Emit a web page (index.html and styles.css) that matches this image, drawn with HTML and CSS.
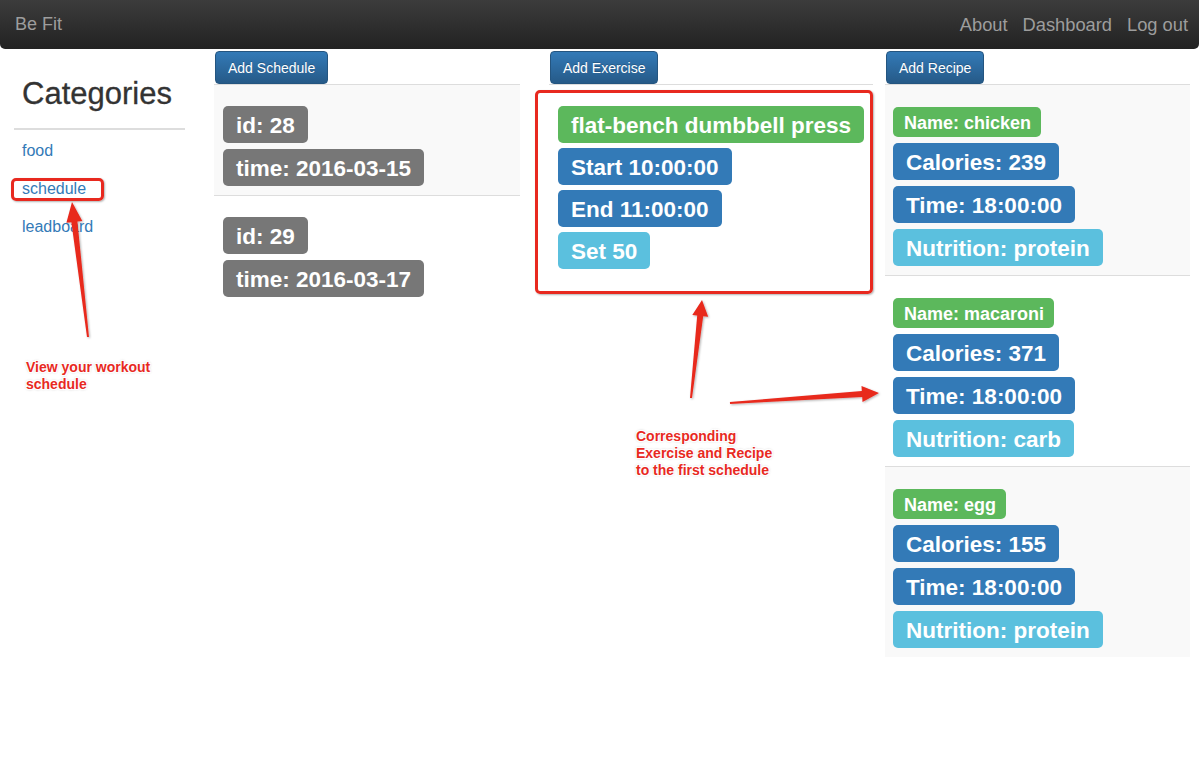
FILE: index.html
```html
<!DOCTYPE html>
<html>
<head>
<meta charset="utf-8">
<title>Be Fit</title>
<link rel="stylesheet" href="styles.css">
</head>
<body>
<nav class="navbar">
  <a class="brand" href="#">Be Fit</a>
  <ul class="nav-right">
    <li><a href="#">About</a></li>
    <li><a href="#">Dashboard</a></li>
    <li><a href="#">Log out</a></li>
  </ul>
</nav>

<div class="main">
  <aside class="sidebar">
    <h1 class="side-title">Categories</h1>
    <hr class="side-rule">
    <ul class="cat-list">
      <li><a href="#">food</a></li>
      <li><a href="#">schedule</a></li>
      <li><a href="#">leadboard</a></li>
    </ul>
  </aside>

  <section class="col">
    <button class="btn">Add Schedule</button>
    <div class="rows">
      <div class="row sched striped">
        <span class="label l-default">id: 28</span>
        <span class="label l-default">time: 2016-03-15</span>
      </div>
      <div class="row sched">
        <span class="label l-default">id: 29</span>
        <span class="label l-default">time: 2016-03-17</span>
      </div>
    </div>
  </section>

  <section class="col">
    <button class="btn">Add Exercise</button>
    <div class="rows wide">
      <div class="row exer">
        <span class="label l-success">flat-bench dumbbell press</span>
        <span class="label l-primary">Start 10:00:00</span>
        <span class="label l-primary">End 11:00:00</span>
        <span class="label l-info">Set 50</span>
      </div>
    </div>
  </section>

  <section class="col">
    <button class="btn">Add Recipe</button>
    <div class="rows">
      <div class="row recipe striped">
        <span class="label small l-success">Name: chicken</span>
        <span class="label l-primary">Calories: 239</span>
        <span class="label l-primary">Time: 18:00:00</span>
        <span class="label l-info">Nutrition: protein</span>
      </div>
      <div class="row recipe">
        <span class="label small l-success">Name: macaroni</span>
        <span class="label l-primary">Calories: 371</span>
        <span class="label l-primary">Time: 18:00:00</span>
        <span class="label l-info">Nutrition: carb</span>
      </div>
      <div class="row recipe striped">
        <span class="label small l-success">Name: egg</span>
        <span class="label l-primary">Calories: 155</span>
        <span class="label l-primary">Time: 18:00:00</span>
        <span class="label l-info">Nutrition: protein</span>
      </div>
    </div>
  </section>
</div>

<div class="annotations">
  <div class="mark mark-schedule"></div>
  <div class="mark mark-exercise"></div>
  <svg class="arrows" width="1199" height="782" viewBox="0 0 1199 782">
    <defs>
      <filter id="sh" x="-20%" y="-20%" width="140%" height="140%">
        <feDropShadow dx="1" dy="1" stdDeviation="1" flood-color="#000" flood-opacity="0.3"/>
      </filter>
    </defs>
    <g fill="#e8291f" filter="url(#sh)">
      <polygon points="89,336.9 77.4,221.5 82.3,220.9 72,202 66.4,222.8 71.4,222.3 87,337.1"/>
      <polygon points="692,398.1 703.2,316.2 708.2,316.8 702,300 692.3,315 697.2,315.6 690,397.9"/>
      <polygon points="730.1,404 862.2,397.1 862.5,402.1 879,393 861.5,386.1 861.8,391.1 729.9,402"/>
    </g>
  </svg>
  <p class="note note-left">View your workout<br>schedule</p>
  <p class="note note-mid">Corresponding<br>Exercise and Recipe<br>to the first schedule</p>
</div>
</body>
</html>
```

FILE: styles.css
```css
* { box-sizing: border-box; }

html, body {
  margin: 0;
  padding: 0;
  background: #fff;
}

body {
  position: relative;
  width: 1199px;
  min-height: 782px;
  font-family: "Liberation Sans", Arial, Helvetica, sans-serif;
  color: #333;
}

/* ---------- navbar ---------- */
.navbar {
  height: 49px;
  display: flex;
  align-items: center;
  justify-content: space-between;
  padding: 0 11px 0 15px;
  background: linear-gradient(#3c3c3c, #222);
  border-radius: 0 0 5px 5px;
}

.brand {
  font-size: 18px;
  color: #9d9d9d;
  text-decoration: none;
}

.nav-right {
  display: flex;
  gap: 15px;
  margin: 0;
  padding: 0;
  list-style: none;
}

.nav-right a {
  font-size: 18.3px;
  color: #9d9d9d;
  text-decoration: none;
}

/* ---------- main grid ---------- */
.main {
  display: grid;
  grid-template-columns: 171px 306px 307px 305px;
  column-gap: 29px;
  padding-left: 14px;
  margin-top: 2px;
  align-items: start;
}

/* ---------- sidebar ---------- */
.side-title {
  margin: 26px 0 0;
  padding-left: 8px;
  font-size: 31px;
  line-height: 33px;
  font-weight: 500;
  color: #333;
  -webkit-text-stroke: 0.3px #333;
}

.side-rule {
  margin: 18px 0 0;
  border: 0;
  border-top: 2px solid #ddd;
}

.cat-list {
  list-style: none;
  margin: 2px 0 0;
  padding: 0 0 0 8px;
}

.cat-list li {
  line-height: 38px;
  font-size: 16px;
}

.cat-list a {
  color: #337ab7;
  text-decoration: none;
}

/* ---------- columns ---------- */
.col {
  display: flex;
  flex-direction: column;
  align-items: flex-start;
}

.btn {
  margin-left: 1px;
  height: 33px;
  padding: 0 12px;
  font-family: "Liberation Sans", Arial, sans-serif;
  font-size: 14px;
  color: #fff;
  background: linear-gradient(#337ab7, #265a88);
  border: 1px solid #245580;
  border-radius: 4px;
  text-shadow: 0 -1px 0 rgba(0, 0, 0, 0.2);
}

.rows {
  width: 100%;
  border-top: 1px solid #ddd;
}

.rows.wide {
  width: max-content;
  min-width: 100%;
}

.row {
  display: flex;
  flex-direction: column;
  align-items: flex-start;
}

.row + .row {
  border-top: 1px solid #ddd;
}

.row.striped {
  background: #f9f9f9;
}

.row.sched {
  padding: 21px 9px 9px;
  gap: 6px;
}

.row.exer {
  padding: 21px 9px 20px;
  gap: 5px;
}

.row.recipe {
  padding: 22px 8px 9px;
  gap: 6px;
}

/* ---------- labels ---------- */
.label {
  display: inline-block;
  height: 37px;
  padding: 8px 13px 6px;
  font-size: 22.5px;
  line-height: 23px;
  font-weight: bold;
  color: #fff;
  border-radius: 5px;
  white-space: nowrap;
}

.label.small {
  height: 30px;
  padding: 7px 10px 5px 11px;
  font-size: 18px;
  line-height: 18px;
}

.l-default { background: #777; }
.l-primary { background: #337ab7; }
.l-success { background: #5cb85c; }
.l-info { background: #5bc0de; }

/* ---------- annotation layer ---------- */
.annotations {
  position: absolute;
  top: 0;
  left: 0;
  width: 1199px;
  height: 782px;
  pointer-events: none;
}

.arrows {
  position: absolute;
  top: 0;
  left: 0;
}

.mark {
  position: absolute;
  border: 3px solid #e8291f;
  border-radius: 5px;
  box-shadow: 1px 1px 2px rgba(0, 0, 0, 0.3);
}

.mark-schedule {
  left: 11px;
  top: 178px;
  width: 93px;
  height: 23px;
}

.mark-exercise {
  left: 535px;
  top: 90px;
  width: 338px;
  height: 204px;
}

.note {
  position: absolute;
  margin: 0;
  font-size: 14px;
  line-height: 17px;
  font-weight: bold;
  color: #e8291f;
  text-shadow:
    -1px -1px 0 #fff, 1px -1px 0 #fff, -1px 1px 0 #fff, 1px 1px 0 #fff,
    0 0 3px rgba(0, 0, 0, 0.4);
}

.note-left {
  left: 26px;
  top: 359px;
}

.note-mid {
  left: 636px;
  top: 428px;
}
```
